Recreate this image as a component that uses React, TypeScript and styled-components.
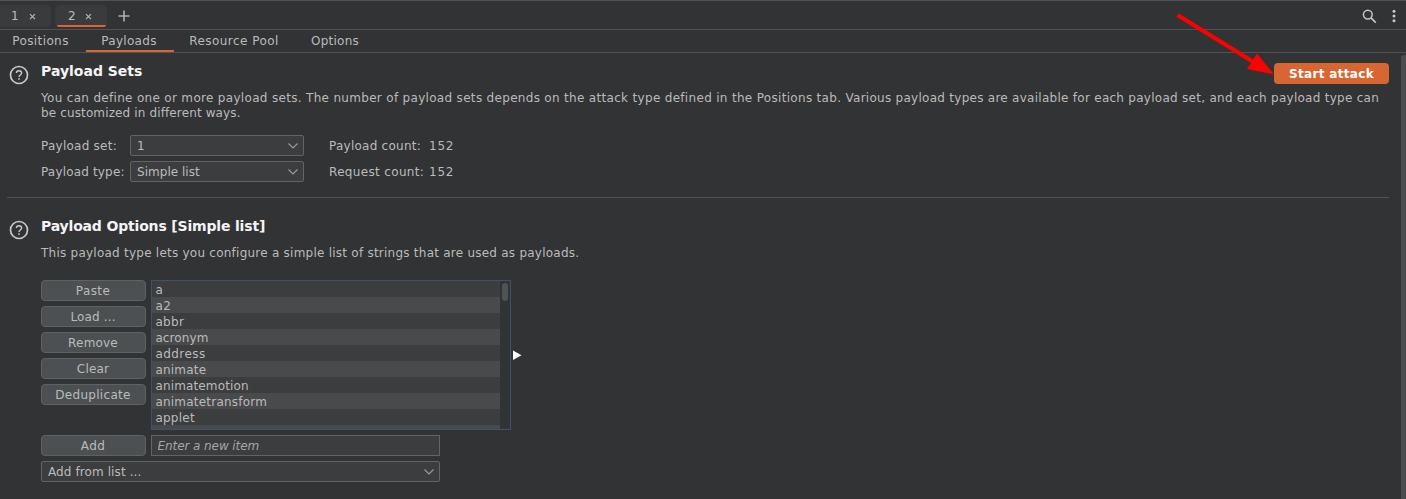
import React from 'react';
import styled, { createGlobalStyle, css } from 'styled-components';

const line = '#505254';
const orange = '#d86633';

const GlobalStyle = createGlobalStyle`
  * { box-sizing: border-box; }
  body {
    margin: 0;
    background: #313335;
    color: #bbbbbb;
    font: 12px/15px "DejaVu Sans", Verdana, sans-serif;
    overflow: hidden;
  }
  button, input { font: inherit; color: inherit; }
`;

const Window = styled.div`
  position: relative;
  display: flex;
  flex-direction: column;
  width: 1406px;
  height: 499px;
  overflow: hidden;
  border-top: 1px solid ${line};
`;

const AttackBar = styled.header`
  display: flex;
  align-items: flex-start;
  height: 29px;
  padding-top: 4px;
  border-bottom: 1px solid ${line};
`;

const AttackTab = styled.div<{ $active?: boolean; $first?: boolean }>`
  display: flex;
  align-items: center;
  position: relative;
  width: ${p => (p.$first ? 51 : 52)}px;
  height: 22px;
  margin-right: 4px;
  padding-left: ${p => (p.$first ? 11 : 13)}px;
  border-radius: ${p => (p.$first ? '0 5px 5px 0' : '5px')};
  background: #3a3b3c;
  ${p => p.$active && css`
    &::after {
      content: '';
      position: absolute;
      left: 2px;
      right: 1px;
      bottom: 0;
      height: 2px;
      border-radius: 0 0 3px 3px;
      background: ${orange};
    }
  `}
`;

const TabNumber = styled.span<{ $w: number }>`
  width: ${p => p.$w}px;
`;

const BarIcon = styled.svg<{ $left?: number; $top?: number }>`
  flex: none;
  display: block;
  margin-left: ${p => p.$left ?? 0}px;
  margin-top: ${p => p.$top ?? 0}px;
`;

const Spacer = styled.div`
  flex: 1;
`;

const SubNav = styled.nav`
  display: flex;
  height: 23px;
  border-bottom: 1px solid ${line};
`;

const SubTab = styled.div<{ $w: number; $active?: boolean; $track?: number }>`
  width: ${p => p.$w}px;
  height: 22px;
  padding-top: 4px;
  text-align: center;
  white-space: nowrap;
  letter-spacing: ${p => p.$track ?? 0.4}px;
  border-bottom: 2px solid ${p => (p.$active ? orange : 'transparent')};
  ${p => p.$active && css`padding-right: 2px;`}
`;

const Body = styled.main`
  display: flex;
  flex: 1;
  min-height: 0;
`;

const Content = styled.div`
  width: 1382px;
  margin-left: 7px;
`;

const PageScroll = styled.div`
  width: 5px;
  margin: 2px 0 0 12px;
  border-radius: 3px 0 0 0;
  background: #4b4c4e;
`;

const Section = styled.section<{ $h: number; $ruled?: boolean }>`
  display: flex;
  height: ${p => p.$h}px;
  padding-top: ${p => (p.$ruled ? 10 : 20)}px;
  ${p => p.$ruled && css`border-bottom: 1px solid ${line};`}
`;

const HelpIcon = styled.svg`
  flex: none;
  margin: 2px 12px 0 2px;
`;

const SectionBody = styled.div`
  flex: 1;
  min-width: 0;
`;

const HeadRow = styled.div`
  display: flex;
  justify-content: space-between;
  height: 28px;
`;

const Heading = styled.h2<{ $track?: number }>`
  margin: 0;
  font-size: 14px;
  line-height: 17px;
  font-weight: bold;
  color: #f4f4f4;
  letter-spacing: ${p => p.$track ?? 0}px;
`;

const StartButton = styled.button`
  width: 115px;
  height: 21px;
  padding: 1px 0 0;
  border: 0;
  border-radius: 4px;
  background: ${orange};
  color: #fff;
  font-weight: bold;
  letter-spacing: 0.32px;
`;

const Copy = styled.p<{ $track: number }>`
  margin: 0;
  white-space: nowrap;
  letter-spacing: ${p => p.$track}px;
`;

const CopyRun = styled.span<{ $track: number }>`
  letter-spacing: ${p => p.$track}px;
`;

const Fields = styled.div`
  display: grid;
  grid-template-columns: 89px 174px 25px 100px auto;
  grid-auto-rows: 21px;
  row-gap: 5px;
  align-items: center;
  margin-top: 14px;
`;

const Label = styled.span<{ $track?: number; $col?: number }>`
  padding-top: 1px;
  white-space: nowrap;
  letter-spacing: ${p => p.$track ?? 0.4}px;
  ${p => p.$col && css`grid-column: ${p.$col};`}
`;

const SelectBox = styled.div`
  display: flex;
  align-items: center;
  justify-content: space-between;
  height: 21px;
  padding: 0 4px 0 6px;
  border: 1px solid #626466;
  border-radius: 2px;
  background: #3c3d3f;
`;

const Editor = styled.div`
  display: flex;
  height: 150px;
  margin-top: 19px;
`;

const Buttons = styled.div`
  display: flex;
  flex-direction: column;
  gap: 5px;
  margin-right: 5px;
`;

const Button = styled.button<{ $track?: number }>`
  width: 105px;
  height: 21px;
  padding: 1px 1px 0 0;
  border: 1px solid #5f6263;
  border-radius: 4px;
  background: #4c5052;
  line-height: 15px;
  letter-spacing: ${p => p.$track ?? 0.4}px;
`;

const ListBox = styled.div`
  display: flex;
  width: 360px;
  height: 150px;
  border: 1px solid #43506c;
  overflow: hidden;
`;

const Items = styled.div`
  width: 348px;
`;

const Item = styled.div<{ $track: number }>`
  height: 16px;
  padding-left: 3.4px;
  line-height: 18px;
  background: #3c3d3f;
  letter-spacing: ${p => p.$track}px;
  &:nth-child(even) { background: #494a4c; }
`;

const ListThumb = styled.div`
  width: 6px;
  height: 18px;
  margin: 2px 2px;
  border-radius: 3px;
  background: #515254;
`;

const Expander = styled.svg`
  margin: 70px 0 0 2px;
`;

const AddRow = styled.div`
  display: flex;
  gap: 5px;
  margin: 5px 0;
`;

const NewItem = styled.input`
  width: 289px;
  height: 21px;
  padding: 0 5.5px;
  border: 1px solid #626466;
  background: #3c3d3f;
  outline: 0;
  letter-spacing: -0.08px;
  &::placeholder { color: #a6a6a6; opacity: 1; font-style: italic; }
`;

const AddFromList = styled(SelectBox)`
  width: 399px;
`;

const Arrow = styled.svg`
  position: absolute;
  left: 1170px;
  top: 7px;
`;

const Close = () => (
  <svg width="7" height="7" viewBox="0 0 7 7">
    <path d="M1 1.2 6 6.2M6 1.2 1 6.2" stroke="#bbb" strokeWidth="1.1" />
  </svg>
);

const Chevron = () => (
  <svg width="12" height="8" viewBox="0 0 12 8">
    <path d="M1.5 1.5 6 6 10.5 1.5" fill="none" stroke="#999b9d" strokeWidth="1.2" />
  </svg>
);

const Help = () => (
  <HelpIcon width="20" height="20" viewBox="0 0 20 20" fill="none">
    <circle cx="10" cy="10" r="8.5" stroke="#c8c9ca" strokeWidth="1.7" />
    <path d="M7.4 8.1C7.4 6.6 8.5 5.7 10 5.7s2.6.9 2.6 2.3c0 1.9-2.6 2-2.6 4" stroke="#c8c9ca" strokeWidth="1.4" />
    <path d="M9.2 13.2h1.6v1.6H9.2z" fill="#c8c9ca" />
  </HelpIcon>
);

const items: [string, number][] = [
  ['a', 0], ['a2', 0.4], ['abbr', 0.3], ['acronym', 0.1], ['address', 0.45],
  ['animate', 0.2], ['animatemotion', 0.15], ['animatetransform', 0.22], ['applet', 0.25], ['', 0],
];

export default function App() {
  return (
    <Window>
      <GlobalStyle />
      <AttackBar>
        <AttackTab $first><TabNumber $w={18}>1</TabNumber><Close /></AttackTab>
        <AttackTab $active><TabNumber $w={17}>2</TabNumber><Close /></AttackTab>
        <BarIcon $left={7} $top={5} width="12" height="12" viewBox="0 0 12 12">
          <path d="M6 .5v11M.5 6h11" stroke="#aeb0b2" strokeWidth="1.6" />
        </BarIcon>
        <Spacer />
        <BarIcon $top={4} width="15" height="15" viewBox="0 0 15 15" fill="none">
          <circle cx="5.8" cy="5.6" r="4.4" stroke="#c4c5c6" strokeWidth="1.5" />
          <path d="m9 8.8 4.8 4.8" stroke="#c4c5c6" strokeWidth="1.7" />
        </BarIcon>
        <BarIcon $left={10} $top={4} width="19" height="14" viewBox="0 0 19 14" fill="#c8c9ca">
          <circle cx="7" cy="2.2" r="1.5" />
          <circle cx="7" cy="7" r="1.5" />
          <circle cx="7" cy="11.8" r="1.5" />
        </BarIcon>
      </AttackBar>
      <SubNav>
        <SubTab $w={81}>Positions</SubTab>
        <SubTab $w={5} />
        <SubTab $w={88} $active $track={0.3}>Payloads</SubTab>
        <SubTab $w={120} $track={0.45}>Resource Pool</SubTab>
        <SubTab $w={82} $track={0.25}>Options</SubTab>
      </SubNav>
      <Body>
        <Content>
          <Section $h={145} $ruled>
            <Help />
            <SectionBody>
              <HeadRow>
                <Heading>Payload Sets</Heading>
                <StartButton>Start attack</StartButton>
              </HeadRow>
              <Copy $track={0.13}>
                <CopyRun $track={0.314}>You can define one or more payload sets. The number of payload sets depends on the attack type defined in the Positions tab. </CopyRun>
                <CopyRun $track={0.273}>Various payload types are available for each payload set, and each payload type can</CopyRun>
                <br />
                be customized in different ways.
              </Copy>
              <Fields>
                <Label $track={0.25}>Payload set:</Label>
                <SelectBox><Label>1</Label><Chevron /></SelectBox>
                <Label $col={4} $track={0.25}>Payload count:</Label>
                <Label $track={0.8}>152</Label>
                <Label $track={0.17}>Payload type:</Label>
                <SelectBox><Label $track={0.03}>Simple list</Label><Chevron /></SelectBox>
                <Label $col={4} $track={0.34}>Request count:</Label>
                <Label $track={0.8}>152</Label>
              </Fields>
            </SectionBody>
          </Section>
          <Section $h={301}>
            <Help />
            <SectionBody>
              <HeadRow><Heading $track={-0.17}>Payload Options [Simple list]</Heading></HeadRow>
              <Copy $track={0.24}>This payload type lets you configure a simple list of strings that are used as payloads.</Copy>
              <Editor>
                <Buttons>
                  <Button>Paste</Button>
                  <Button $track={0.15}>Load ...</Button>
                  <Button $track={0.2}>Remove</Button>
                  <Button $track={0.2}>Clear</Button>
                  <Button $track={0.3}>Deduplicate</Button>
                </Buttons>
                <ListBox>
                  <Items>
                    {items.map(([name, track]) => <Item key={name} $track={track}>{name}</Item>)}
                  </Items>
                  <ListThumb />
                </ListBox>
                <Expander width="9" height="10" viewBox="0 0 9 10"><path d="M0 .5 8.5 5.2 0 10z" fill="#fff" /></Expander>
              </Editor>
              <AddRow>
                <Button>Add</Button>
                <NewItem placeholder="Enter a new item" />
              </AddRow>
              <AddFromList><Label $track={0.1}>Add from list ...</Label><Chevron /></AddFromList>
            </SectionBody>
          </Section>
        </Content>
        <PageScroll />
      </Body>
      <Arrow width="110" height="75" viewBox="1170 8 110 75">
        <path d="M1177.5 15 1256 63.5" stroke="#f00" strokeWidth="4" />
        <path d="M1274 74.5 1247 69 1257 53.5z" fill="#f00" />
      </Arrow>
    </Window>
  );
}
